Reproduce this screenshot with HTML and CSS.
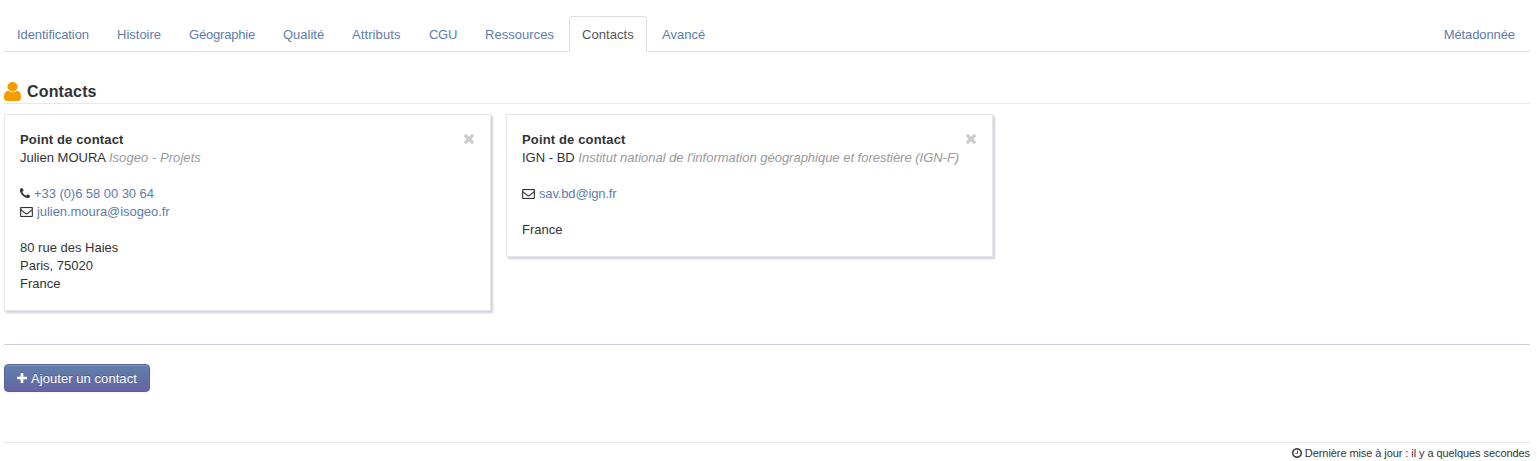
FILE: index.html
```html
<!DOCTYPE html>
<html lang="fr">
<head>
<meta charset="utf-8">
<title>Contacts</title>
<link rel="stylesheet" href="styles.css">
</head>
<body>
<svg class="sprite" aria-hidden="true">
  <symbol id="user" viewBox="256 128 1280 1536" preserveAspectRatio="none"><path d="M1536 1399q0 109-62.5 187t-150.5 78h-854q-88 0-150.5-78t-62.5-187q0-85 8.5-160.5t31.5-152 58.5-131 94-89 134.5-34.5q131 128 313 128t313-128q76 0 134.5 34.5t94 89 58.5 131 31.5 152 8.5 160.5zm-256-887q0 159-112.5 271.5t-271.5 112.5-271.5-112.5-112.5-271.5 112.5-271.5 271.5-112.5 271.5 112.5 112.5 271.5z"/></symbol>
  <symbol id="phone" viewBox="192 128 1408 1408"><path d="M1600 1240q0 27-10 70.5t-21 68.5q-21 50-122 106-94 51-186 51-27 0-52.5-3.5t-57.5-12.5-47.5-14.5-55.5-20.5-49-18q-98-35-175-83-128-79-264.5-215.5t-215.5-264.5q-48-77-83-175-3-9-18-49t-20.5-55.5-14.5-47.5-12.5-57.5-3.5-52.5q0-92 51-186 56-101 106-122 25-11 68.5-21t70.5-10q14 0 21 3 18 6 53 76 11 19 30 54t35 63.5 31 53.5q3 4 17.5 25t21.5 35.5 7 28.5q0 20-28.5 50t-62 55-62 53-28.5 46q0 9 5 22.5t8.5 20.5 14 24 11.5 19q76 137 174 235t235 174q2 1 19 11.5t24 14 20.5 8.5 22.5 5q18 0 46-28.5t53-62 55-62 50-28.5q14 0 28.5 7t35.5 21.5 25 17.5q25 15 53.5 31t63.5 35 54 30q70 35 76 53 3 7 3 21z"/></symbol>
  <symbol id="envelope" viewBox="0 256 1792 1408"><path d="M1664 1504v-768q-32 36-69 66-268 206-426 338-51 43-83 67t-86.500 48.500-102.500 24.500h-2q-48 0-102.500-24.500t-86.500-48.500-83-67q-158-132-426-338-37-30-69-66v768q0 13 9.500 22.500t22.500 9.500h1472q13 0 22.500-9.500t9.500-22.500zm0-1051v-24.500l-.5-13-3-12.500-5.500-9-9-7.500-14-2.500h-1472q-13 0-22.500 9.500t-9.500 22.500q0 168 147 284 193 152 401 317 6 5 35 29.500t46 37.500 44.500 31.500 50.500 27.500 43 9h2q20 0 43-9t50.500-27.500 44.500-31.500 46-37.500 35-29.500q208-165 401-317 54-43 100.500-115.500t46.500-131.500zm128-37v1088q0 66-47 113t-113 47h-1472q-66 0-113-47t-47-113v-1088q0-66 47-113t113-47h1472q66 0 113 47t47 113z"/></symbol>
  <symbol id="times" viewBox="302 366 1188 1188"><path d="M1490 1322q0 40-28 68l-136 136q-28 28-68 28t-68-28l-294-294-294 294q-28 28-68 28t-68-28l-136-136q-28-28-28-68t28-68l294-294-294-294q-28-28-28-68t28-68l136-136q28-28 68-28t68 28l294 294 294-294q28-28 68-28t68 28l136 136q28 28 28 68t-28 68l-294 294 294 294q28 28 28 68z"/></symbol>
  <symbol id="plus" viewBox="192 128 1408 1408"><path d="M1600 736v192q0 40-28 68t-68 28h-416v416q0 40-28 68t-68 28h-192q-40 0-68-28t-28-68v-416h-416q-40 0-68-28t-28-68v-192q0-40 28-68t68-28h416v-416q0-40 28-68t68-28h192q40 0 68 28t28 68v416h416q40 0 68 28t28 68z"/></symbol>
  <symbol id="clock" viewBox="128 128 1536 1536"><path d="M1024 544v448q0 14-9 23t-23 9h-320q-14 0-23-9t-9-23v-64q0-14 9-23t23-9h224v-352q0-14 9-23t23-9h64q14 0 23 9t9 23zm416 352q0-148-73-273t-198-198-273-73-273 73-198 198-73 273 73 273 198 198 273 73 273-73 198-198 73-273zm224 0q0 209-103 385.5t-279.5 279.5-385.5 103-385.5-103-279.5-279.5-103-385.5 103-385.5 279.5-279.5 385.5-103 385.5 103 279.5 279.5 103 385.5z"/></symbol>
</svg>
<nav class="tabs">
  <a class="tab tab-id">Identification</a>
  <a class="tab tab-history">Histoire</a>
  <a class="tab tab-geo">Géographie</a>
  <a class="tab tab-quality">Qualité</a>
  <a class="tab tab-attr">Attributs</a>
  <a class="tab tab-cgu">CGU</a>
  <a class="tab tab-res">Ressources</a>
  <a class="tab active">Contacts</a>
  <a class="tab">Avancé</a>
  <a class="tab last">Métadonnée</a>
</nav>
<h2 class="heading"><svg class="icon-user"><use href="#user"/></svg><span>Contacts</span></h2>
<section class="cards">
  <article class="card">
    <div class="card-head"><strong>Point de contact</strong><svg class="icon-times"><use href="#times"/></svg></div>
    <p>Julien MOURA <em class="org-short">Isogeo - Projets</em></p>
    <p class="row gap-top"><svg class="icon-phone"><use href="#phone"/></svg><a class="link">+33 (0)6 58 00 30 64</a></p>
    <p class="row"><svg class="icon-mail"><use href="#envelope"/></svg><a class="link">julien.moura@isogeo.fr</a></p>
    <p class="gap-top">80 rue des Haies</p>
    <p>Paris, 75020</p>
    <p>France</p>
  </article>
  <article class="card">
    <div class="card-head"><strong>Point de contact</strong><svg class="icon-times"><use href="#times"/></svg></div>
    <p>IGN - BD <em>Institut national de l'information géographique et forestière (IGN-F)</em></p>
    <p class="row gap-top"><svg class="icon-mail"><use href="#envelope"/></svg><a class="link mail-short">sav.bd@ign.fr</a></p>
    <p class="gap-top">France</p>
  </article>
</section>
<div class="actions">
  <button class="btn"><svg class="icon-plus"><use href="#plus"/></svg><span>Ajouter un contact</span></button>
</div>
<footer class="footer"><svg class="icon-clock"><use href="#clock"/></svg><span>Dernière mise à jour : il y a quelques secondes</span></footer>
</body>
</html>
```
FILE: styles.css
```css
* { box-sizing: border-box; }
html { overflow: hidden; }
body {
  margin: 0;
  padding: 16px 7px 0 4px;
  background: #fff;
  color: #333;
  font: 13px/18px "Liberation Sans", Arial, sans-serif;
}
.sprite { display: none; }
svg { fill: currentColor; flex: none; }
p { margin: 0; white-space: nowrap; }
a { color: #5e7dab; }
.tabs {
  display: flex;
  gap: 2px;
  height: 36px;
  border-bottom: 1px solid #ddd;
}
.tab {
  height: 36px;
  padding: 10px 0 8px 13px;
  white-space: nowrap;
}
.tab-id { width: 98px; letter-spacing: -0.07px; }
.tab-history { width: 70px; }
.tab-geo { width: 92px; letter-spacing: -0.2px; }
.tab-quality { width: 67px; }
.tab-attr { width: 75px; letter-spacing: 0.1px; }
.tab-cgu { width: 54px; letter-spacing: -0.3px; }
.tab-res { width: 95px; letter-spacing: 0.03px; }
.tab.active {
  width: 78px;
  padding: 9px 0 7px 12px;
  border: 1px solid #ddd;
  border-bottom-color: #fff;
  border-radius: 4px 4px 0 0;
  background: #fff;
  color: #555;
  letter-spacing: 0.05px;
}
.tab.last { margin-left: auto; padding-right: 15px; letter-spacing: -0.1px; }
.heading {
  display: flex;
  align-items: center;
  gap: 6px;
  height: 26px;
  margin: 26px 0 10px;
  border-bottom: 1px solid #e9e9ed;
  font-size: 16px;
  line-height: 24px;
}
.icon-user { width: 17px; height: 19px; margin-top: 1px; color: #f59c00; }
.heading span { margin-top: 2px; letter-spacing: 0.15px; }
.cards {
  display: flex;
  align-items: flex-start;
  gap: 15px;
}
.card {
  width: 487px;
  padding: 16px 15px 17px;
  border: 1px solid #e6e6ec;
  box-shadow: 2px 2px 2px #d0d0dc;
}
.card em { color: #999; letter-spacing: -0.015px; }
.card em.org-short { letter-spacing: 0.06px; }
.card strong { letter-spacing: 0.15px; }
.card-head { display: flex; align-items: center; justify-content: space-between; }
.link { letter-spacing: -0.06px; }
.mail-short { letter-spacing: -0.15px; }
.row { display: flex; align-items: center; }
.gap-top { margin-top: 18px; }
.icon-times { width: 10px; height: 10px; margin: -2px 1px 0 0; color: #ccc; }
.icon-phone { width: 10px; height: 10px; margin: -2px 4px 0 0; }
.icon-mail { width: 13px; height: 10px; margin-right: 4px; stroke: currentColor; stroke-width: 40px; }
.actions {
  margin-top: 33px;
  padding-top: 19px;
  border-top: 1px solid #cfcfdb;
}
.btn {
  display: flex;
  align-items: center;
  gap: 4px;
  width: 146px;
  height: 28px;
  padding: 0 12px;
  border: 1px solid #56639b;
  border-radius: 4px;
  background: linear-gradient(#6080ab, #6564a4);
  box-shadow: inset 0 1px 0 rgba(255, 255, 255, .2), 0 1px 2px rgba(0, 0, 0, .05);
  color: #fff;
  font: inherit;
  text-shadow: 0 -1px 0 rgba(0, 0, 0, .25);
  white-space: nowrap;
}
.btn span { padding-top: 2px; letter-spacing: 0.06px; }
.icon-plus { width: 10px; height: 10px; }
.footer {
  display: flex;
  align-items: center;
  justify-content: flex-end;
  gap: 3px;
  margin-top: 50px;
  padding-top: 1px;
  border-top: 1px solid #e9e9ed;
  font-size: 11px;
}
.footer span { letter-spacing: -0.075px; }
.icon-clock { width: 10px; height: 10px; }
```
